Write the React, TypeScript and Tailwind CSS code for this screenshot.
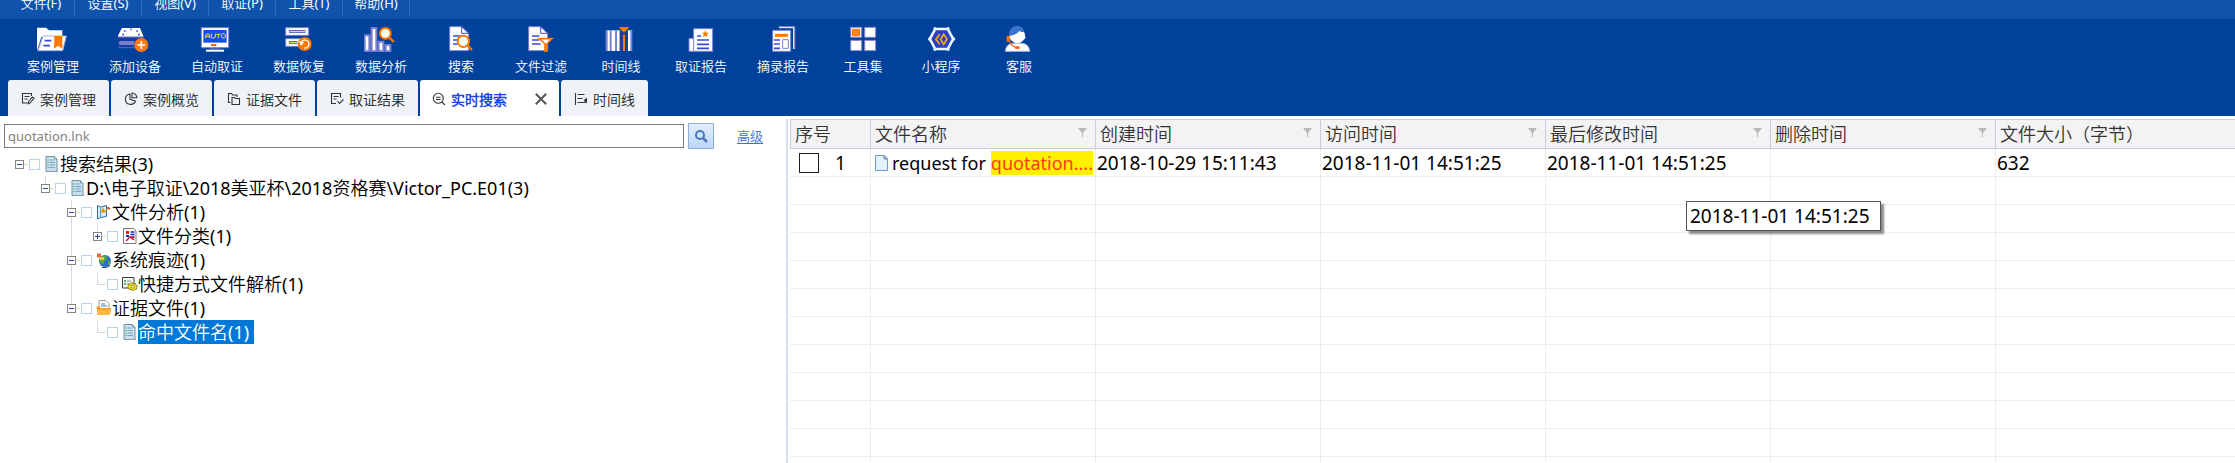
import React from "react";
import type { ReactNode } from "react";

const menus = ["文件(F)", "设置(S)", "视图(V)", "取证(P)", "工具(T)", "帮助(H)"];

function ToolIcon({ x, children }: { x: number; children: ReactNode }) {
  return (
    <svg width="34" height="26" viewBox={`${x} 78 102 78`} aria-hidden="true" className="block">
      {children}
    </svg>
  );
}

const lilac = "#7c80d0";
const navy = "#3a4ccf";
const orange = "#ff7800";

const tools: { label: string; icon: ReactNode }[] = [
  {
    label: "案例管理",
    icon: (
      <ToolIcon x={108}>
        <path d="M111 83h27l9 8h40v20H124l-13 42z" fill="#fff" />
        <path d="M129 108h70l-11 44h-74z" fill="#fff" stroke="#a9aee0" strokeWidth="3" />
        <path d="M134 122h20M130 137h20" stroke={navy} strokeWidth="5" />
        <path d="M163 108h24v38l-13-9-12 9z" fill={orange} />
      </ToolIcon>
    ),
  },
  {
    label: "添加设备",
    icon: (
      <ToolIcon x={354}>
        <path d="M366 84h54l11 26h-79z" fill="#fff" />
        <path d="M352 112h78v31h-78z" fill="#1b3c9c" stroke="#5a64c0" strokeWidth="3" />
        <path d="M362 129h36" stroke="#7480cc" strokeWidth="12" strokeLinecap="round" />
        <path d="M372 93h5M409 93h5M367 104h5M414 104h5M391 88h4" stroke={navy} strokeWidth="5" />
        <circle cx="424" cy="135" r="21" fill={orange} />
        <path d="M424 123v24M412 135h24" stroke="#fff" strokeWidth="5" />
      </ToolIcon>
    ),
  },
  {
    label: "自动取证",
    icon: (
      <ToolIcon x={600}>
        <path d="M604 83h82v60h-82z" fill="#fff" stroke={lilac} strokeWidth="3" />
        <path d="M610 90h70v38h-70z" fill="#1450e6" />
        <path
          d="M617 115v-9l3-4h6l3 4v9M617 109h12M634 101v10l3 3h6l3-3v-10M649 103h13M655 103v12M665 104l3-3h5l3 3v7l-3 3h-5l-3-3z"
          fill="none"
          stroke="#f4ea2a"
          strokeWidth="3"
        />
        <path d="M633 135h16" stroke="#ff6000" strokeWidth="6" />
        <path d="M618 152h54" stroke="#fff" strokeWidth="6" />
        <path d="M630 147h30" stroke={lilac} strokeWidth="3" />
      </ToolIcon>
    ),
  },
  {
    label: "数据恢复",
    icon: (
      <ToolIcon x={846}>
        <path d="M857 83h69v23h-69zM857 116h69v23h-69z" fill="#fff" stroke={lilac} strokeWidth="3" />
        <path d="M867 94h49M867 127h25" stroke="#303cae" strokeWidth="8" />
        <path d="M868 94h47M868 127h23" stroke="#e8e83c" strokeWidth="4" />
        <circle cx="914" cy="132" r="21" fill={orange} />
        <path d="M903 130a12 12 0 1 1 10 14" fill="none" stroke="#fff" strokeWidth="4" />
        <path d="M896 124l16 2-8 11z" fill="#fff" />
      </ToolIcon>
    ),
  },
  {
    label: "数据分析",
    icon: (
      <ToolIcon x={1092}>
        <path
          d="M1094 106h14v48h-14zM1115 84h14v70h-14zM1136 125h14v29h-14zM1157 135h14v19h-14z"
          fill="#fff"
          stroke={lilac}
          strokeWidth="6"
        />
        <circle cx="1156" cy="100" r="16" fill="#fff" stroke={orange} strokeWidth="6" />
        <path d="M1167 112l15 14" stroke={orange} strokeWidth="7" />
      </ToolIcon>
    ),
  },
  {
    label: "搜索",
    icon: (
      <ToolIcon x={132}>
        <path d="M149 80h37l20 20v52h-57z" fill="#fff" stroke={lilac} strokeWidth="3" />
        <path d="M185 80v20h21z" fill="#fff" stroke={navy} strokeWidth="3" />
        <path d="M159 108h24M159 120h14M159 132h14" stroke={navy} strokeWidth="5" />
        <circle cx="190" cy="124" r="17" fill="#fff" stroke={orange} strokeWidth="6" />
        <path d="M203 137l13 13" stroke={orange} strokeWidth="7" />
      </ToolIcon>
    ),
  },
  {
    label: "文件过滤",
    icon: (
      <ToolIcon x={372}>
        <path d="M386 80h37l20 20v52h-57z" fill="#fff" stroke={lilac} strokeWidth="3" />
        <path d="M422 80v20h21z" fill="#fff" stroke={navy} strokeWidth="3" />
        <path d="M396 108h22M396 120h22M396 132h26" stroke={navy} strokeWidth="5" />
        <path d="M418 116h38l-16 16v22h-5v-22z" fill="#fff" stroke={orange} strokeWidth="5" />
      </ToolIcon>
    ),
  },
  {
    label: "时间线",
    icon: (
      <ToolIcon x={612}>
        <path d="M618 91h78v62h-78z" fill="#fff" />
        <path d="M620 91v62M632 91v62M648 91v62M661 91v62M694 91v62" stroke={lilac} strokeWidth="6" />
        <path d="M660 91h24v62h-24z" fill="#1b3c9c" />
        <path d="M672 104v49" stroke={orange} strokeWidth="6" />
        <path d="M656 81h32l-16 17z" fill={orange} />
      </ToolIcon>
    ),
  },
  {
    label: "取证报告",
    icon: (
      <ToolIcon x={852}>
        <path d="M867 115h18v39h-18z" fill="#fff" stroke={lilac} strokeWidth="3" />
        <path d="M881 86h57v68h-57z" fill="#fff" stroke={lilac} strokeWidth="3" />
        <path d="M891 108h12M891 120h36M891 133h36M891 145h36" stroke={navy} strokeWidth="5" />
        <path d="M916 91l3 7h7l-5 5 2 8-7-4-7 4 2-8-5-5h7z" fill={orange} />
      </ToolIcon>
    ),
  },
  {
    label: "摘录报告",
    icon: (
      <ToolIcon x={1098}>
        <path d="M1137 81h46v66" fill="none" stroke={lilac} strokeWidth="6" />
        <path d="M1137 83h44v64" fill="none" stroke="#fff" strokeWidth="3" />
        <path d="M1118 91h54v63h-54z" fill="#fff" stroke={lilac} strokeWidth="3" />
        <path d="M1125 106h39" stroke={orange} strokeWidth="9" />
        <path d="M1122 120h18M1122 132h18M1122 145h18" stroke={navy} strokeWidth="5" />
        <path d="M1148 119h17v26h-17z" fill="#fff" stroke={lilac} strokeWidth="3" />
      </ToolIcon>
    ),
  },
  {
    label: "工具集",
    icon: (
      <ToolIcon x={138}>
        <path
          d="M152 82h33v30h-33zM194 82h33v30h-33zM152 121h33v31h-33zM194 121h33v31h-33z"
          fill="#fff"
          stroke={lilac}
          strokeWidth="3"
        />
        <path d="M157 88h22v19h-22z" fill="#ff8c00" stroke="#ff6a00" strokeWidth="3" />
      </ToolIcon>
    ),
  },
  {
    label: "小程序",
    icon: (
      <ToolIcon x={372}>
        <path d="M405 86h39l17 31-17 31h-39l-17-31z" fill="#dff2ff" stroke="#f2fbff" strokeWidth="5" strokeLinejoin="round" />
        <path d="M408 91h33l14 26-14 26h-33l-14-26z" fill="#2c3fc4" />
        <g fill="#dff2ff">
          <circle cx="405" cy="86" r="5" />
          <circle cx="444" cy="86" r="5" />
          <circle cx="461" cy="117" r="5" />
          <circle cx="444" cy="148" r="5" />
          <circle cx="405" cy="148" r="5" />
          <circle cx="389" cy="117" r="5" />
        </g>
        <path d="M419 103l-11 15 11 15M431 103l-9 15 9 15 10-15z" fill="none" stroke="#f5a81c" strokeWidth="5" />
      </ToolIcon>
    ),
  },
  {
    label: "客服",
    icon: (
      <ToolIcon x={606}>
        <path d="M616 154c1-14 10-23 22-24h28c14 1 22 10 23 24z" fill="#fff" stroke="#a9aee0" strokeWidth="3" />
        <circle cx="652" cy="107" r="23" fill="#fff" />
        <path d="M672 102l5 11-6 6z" fill="#fff" />
        <path d="M628 108c-3-18 8-30 23-30 12 0 20 7 23 18-8 1-13-1-16-4-5 10-17 13-30 16z" fill="#3a74cc" />
        <path d="M620 108h10v17h-10z" fill={orange} />
        <path d="M629 122c2 10 8 17 18 20" fill="none" stroke="#ff6000" strokeWidth="4" />
        <ellipse cx="652" cy="143" rx="8" ry="4" fill="#ff6000" />
      </ToolIcon>
    ),
  },
];

/* Outline icons drawn on a 14 x 14 grid */
function TabIcon({ children }: { children: ReactNode }) {
  return (
    <svg width="14" height="14" viewBox="0 0 14 14" fill="none" stroke="#333" strokeWidth="1.1" aria-hidden="true" className="block shrink-0">
      {children}
    </svg>
  );
}

const tabs: { label: string; active?: boolean; icon: ReactNode }[] = [
  {
    label: "案例管理",
    icon: (
      <TabIcon>
        <path d="M10.5 4V1.5H1.5V11H6M3.5 4.5h5M3.5 7h3M7.5 9.5L11.5 5l1.5 1.3L9 11l-2 .6z" />
      </TabIcon>
    ),
  },
  {
    label: "案例概览",
    icon: (
      <TabIcon>
        <path d="M6 2A5.2 5.2 0 1 0 11.5 9L6 7.3zM8 1v4.8h4.8A4.8 4.8 0 0 0 8 1z" />
      </TabIcon>
    ),
  },
  {
    label: "证据文件",
    icon: (
      <TabIcon>
        <path d="M3.5 10.5h-2v-9h3l1 1.5H10v2M5 12.5V5.5h2.5l1 1h4v6z" />
      </TabIcon>
    ),
  },
  {
    label: "取证结果",
    icon: (
      <TabIcon>
        <path d="M10.5 5.5v-4h-9v10H6M3.5 4.5h5M3.5 7h3M7.5 9l2 2.5 4-4" />
      </TabIcon>
    ),
  },
  {
    label: "实时搜索",
    active: true,
    icon: (
      <TabIcon>
        <circle cx="6.3" cy="6.3" r="5" />
        <path d="M10 10l3 3M4 5.3h4.6M4 7.5h4.6" />
      </TabIcon>
    ),
  },
  {
    label: "时间线",
    icon: (
      <TabIcon>
        <path d="M1.5 1v12M3.5 2.5h7M3.5 6.5h5M3.5 10.5h8" />
        <path d="M13 5.5v6L9.5 8.5z" fill="#333" stroke="none" />
      </TabIcon>
    ),
  },
];

function NotesIcon() {
  return (
    <svg width="16" height="16" viewBox="0 0 16 16" aria-hidden="true" className="block shrink-0">
      <path d="M2 .5h8.5L13 3v12.5H2z" fill="#c7e0ea" stroke="#6f93a8" />
      <path d="M10.5.5V3H13" fill="#eef7fb" stroke="#6f93a8" />
      <path d="M3.5 4h1M3.5 6.5h1M3.5 9h1M3.5 11.5h1" stroke="#3f9a63" />
      <path d="M5.5 4h4M5.5 6.5h5.500M5.500 9h5.500M5.500 11.500h5.500" stroke="#7fa3c4" />
      <path d="M13.500 14v2H4" fill="none" stroke="#a9a9a9" />
    </svg>
  );
}

function AnalysisIcon() {
  return (
    <svg width="16" height="16" viewBox="0 0 16 16" aria-hidden="true" className="block shrink-0">
      <path d="M1.500 1.500l3 1.500 6-1.500v11l-6 1-3 1.500z" fill="#d7ecfa" stroke="#2b6ca3" />
      <path d="M4.500 3v11" stroke="#5b9bc8" />
      <path d="M4 7l2 1 1-3 1 3 5-4" fill="none" stroke="#d09a18" strokeWidth="1.500" />
      <path d="M11.500 3l2.500 2" stroke="#c0321e" strokeWidth="1.500" />
    </svg>
  );
}

function CategoryIcon() {
  return (
    <svg width="16" height="16" viewBox="0 0 16 16" aria-hidden="true" className="block shrink-0">
      <path d="M1.500.5h10L14 3v12.500H1.500z" fill="#fff" stroke="#777" />
      <path d="M4 3h3v3H4z" fill="#d8202c" />
      <path d="M8.500 4h4M8.500 6.500h4M8.500 9h4" stroke="#1524c8" strokeWidth="1.500" />
      <path d="M4 8h3" stroke="#1524c8" strokeWidth="2" />
      <path d="M4 13l4-4 4 3M11 8v4" fill="none" stroke="#d8202c" strokeWidth="1.500" />
    </svg>
  );
}

function GlobeIcon() {
  return (
    <svg width="16" height="16" viewBox="0 0 16 16" aria-hidden="true" className="block shrink-0">
      <circle cx="9" cy="9" r="6" fill="#2c6fc9" />
      <path d="M7 4c3-1 5 1 4 3s-3 1-3 4-3 1-4-1 0-5 3-6z" fill="#57a83c" />
      <path d="M12 9l2.500-1-1 4-2 1z" fill="#57a83c" />
      <path d="M6 15.300c3 .8 6 0 8-2" fill="none" stroke="#123c77" />
      <path d="M1 1.500h4v4H1z" fill="#e5683c" />
      <path d="M4 5h4v3H4z" fill="#f3c23b" />
    </svg>
  );
}

function ShortcutIcon() {
  return (
    <svg width="16" height="16" viewBox="0 0 16 16" aria-hidden="true" className="block shrink-0">
      <path d="M.5 1.500h11.500v10.500H.5z" fill="#f4f6f4" stroke="#3c3c3c" />
      <path d="M2 5h2M2 8h2" stroke="#1fa33a" strokeWidth="1.500" />
      <path d="M5 5h4M5 8h2" stroke="#888" />
      <path
        d="M10 6.500l1.500 1.300 2-.5.3 1.700 1.700 1-1 1.500.3 1.700-2 .3-1.500 1.200-1.700-1-2 .2-.6-1.600-1.500-1 .9-1.500-.2-1.700 2-.2z"
        fill="#f2e01c"
        stroke="#6d6400"
        strokeWidth=".7"
      />
      <circle cx="10.700" cy="10.700" r="1.500" fill="#fff" stroke="#6d6400" strokeWidth=".7" />
    </svg>
  );
}

function FolderIcon() {
  return (
    <svg width="16" height="16" viewBox="0 0 16 16" aria-hidden="true" className="block shrink-0">
      <path d="M3 .5h7l3 3V9H3z" fill="#fff" stroke="#9a9a9a" />
      <path d="M5 4h4M5 6h6" stroke="#3d78b8" />
      <path d="M.5 6.500h3l1 1.500h10.500l-1 7H1.500z" fill="#f39a1e" />
      <path d="M1.200 9.500h13.500l-1 5.500H1.500z" fill="#ffb743" />
    </svg>
  );
}

type Line = "none" | "on";
const tree: {
  label: string;
  expander?: "+" | "-";
  above: Line;
  below: Line;
  indent: Line[];
  icon: ReactNode;
  selected?: boolean;
}[] = [
  { label: "搜索结果(3)", expander: "-", above: "none", below: "none", indent: [], icon: <NotesIcon /> },
  {
    label: "D:\\电子取证\\2018美亚杯\\2018资格赛\\Victor_PC.E01(3)",
    expander: "-",
    above: "on",
    below: "none",
    indent: ["none"],
    icon: <NotesIcon />,
  },
  { label: "文件分析(1)", expander: "-", above: "on", below: "on", indent: ["none", "none"], icon: <AnalysisIcon /> },
  { label: "文件分类(1)", expander: "+", above: "on", below: "none", indent: ["none", "none", "on"], icon: <CategoryIcon /> },
  { label: "系统痕迹(1)", expander: "-", above: "on", below: "on", indent: ["none", "none"], icon: <GlobeIcon /> },
  { label: "快捷方式文件解析(1)", above: "on", below: "none", indent: ["none", "none", "on"], icon: <ShortcutIcon /> },
  { label: "证据文件(1)", expander: "-", above: "on", below: "none", indent: ["none", "none"], icon: <FolderIcon /> },
  {
    label: "命中文件名(1)",
    above: "on",
    below: "none",
    indent: ["none", "none", "none"],
    icon: <NotesIcon />,
    selected: true,
  },
];

const headers = [
  { label: "序号", filter: false },
  { label: "文件名称", filter: true },
  { label: "创建时间", filter: true },
  { label: "访问时间", filter: true },
  { label: "最后修改时间", filter: true },
  { label: "删除时间", filter: true },
  { label: "文件大小（字节）", filter: false },
];

const blankRows = Array.from({ length: 12 }, (_, i) => i);
const cell = "h-7 border-b border-r border-[#ededed] p-0";

export default function App() {
  return (
    <div className="flex h-screen flex-col overflow-hidden bg-white font-['Noto_Sans','Noto_Sans_CJK_SC_DemiLight','Noto_Sans_CJK_SC_Light','Noto_Sans_CJK_SC',sans-serif] text-black">
      <header className="shrink-0 bg-[#00419c] text-white">
        <nav className="flex h-[19px] items-end overflow-hidden bg-[#1053ad] pl-2">
          {menus.map((m) => (
            <button
              key={m}
              type="button"
              className="mb-[3px] flex h-[26px] w-[67px] shrink-0 items-center justify-center border-r border-[#2f6cbd] text-[13px] leading-none"
            >
              {m}
            </button>
          ))}
        </nav>
        <div className="flex pl-3 pt-[7px]">
          {tools.map((t) => (
            <button key={t.label} type="button" className="flex min-w-[78px] shrink-0 flex-col items-center px-[15px]">
              {t.icon}
              <span className="mt-1 whitespace-nowrap text-[13px] leading-5">{t.label}</span>
            </button>
          ))}
        </div>
        <div className="mt-1 flex gap-0.5 pl-2">
          {tabs.map((t) => (
            <div
              key={t.label}
              className={
                t.active
                  ? "flex h-9 shrink-0 items-center rounded-t-[3px] bg-white px-3 pt-0.5 text-[14px] font-bold text-[#1a46f0]"
                  : "flex h-9 shrink-0 items-center rounded-t-[3px] bg-[#eff3f8] px-[13px] pt-0.5 text-[14px] text-[#222]"
              }
            >
              <button type="button" className="flex items-center gap-[5px] whitespace-nowrap">
                {t.icon}
                {t.label}
              </button>
              {t.active && (
                <button type="button" aria-label="关闭" className="ml-7">
                  <svg width="12" height="12" viewBox="0 0 12 12" className="block">
                    <path d="M.8.8l10.400 10.400M11.200.8L.8 11.200" stroke="#555" strokeWidth="2" />
                  </svg>
                </button>
              )}
            </div>
          ))}
        </div>
      </header>

      <main className="flex min-h-0 flex-1">
        <section className="w-[786px] shrink-0 pt-[7px]">
          <form className="flex items-center pl-1" onSubmit={(e) => e.preventDefault()}>
            <input
              type="text"
              aria-label="关键词"
              defaultValue="quotation.lnk"
              className="h-6 w-[680px] border border-[#7a7a7a] bg-white pl-[3px] text-[13px] text-[#838383] outline-none"
            />
            <button
              type="submit"
              aria-label="查找"
              className="ml-1 flex h-[26px] w-[26px] items-center justify-center border border-[#8fadd6] bg-linear-to-b from-[#e3eefd] to-[#bcd7fa]"
            >
              <svg width="14" height="14" viewBox="0 0 14 14" fill="none" stroke="#4a78b5">
                <circle cx="6" cy="6" r="4" strokeWidth="2" />
                <path d="M9 9l4 4" strokeWidth="2.500" />
              </svg>
            </button>
            <a href="#advanced" className="ml-[23px] text-[13px] leading-5 text-[#3b6fd8] underline underline-offset-2">
              高级
            </a>
          </form>
          <ul className="mt-[3px] pl-[15px]">
            {tree.map((n) => (
              <li key={n.label} className="flex h-6 items-center">
                {n.indent.map((l, i) => (
                  <span key={i} className="flex h-6 w-[26px] shrink-0">
                    {l === "on" && i === n.indent.length - 1 && <span className="ml-1 w-px bg-[#d9d9d9]" />}
                  </span>
                ))}
                <span className="flex h-6 w-[9px] shrink-0 flex-col items-center">
                  <span className={n.above === "on" ? "w-px flex-1 bg-[#d9d9d9]" : "flex-1"} />
                  {n.expander ? (
                    <button
                      type="button"
                      aria-label={n.expander === "+" ? "展开" : "折叠"}
                      className="flex h-[9px] w-[9px] shrink-0 items-center justify-center border border-[#848484] bg-white"
                    >
                      <svg width="5" height="5" viewBox="0 0 5 5" className="block" stroke="#2a4a8c">
                        <path d={n.expander === "+" ? "M0 2.500h5M2.500 0v5" : "M0 2.500h5"} />
                      </svg>
                    </button>
                  ) : (
                    <span className="ml-1 h-px w-[5px] shrink-0 bg-[#d9d9d9]" />
                  )}
                  <span className={n.below === "on" ? "w-px flex-1 bg-[#d9d9d9]" : "flex-1"} />
                </span>
                <span className="mr-px h-px w-1 shrink-0 bg-[#d9d9d9]" />
                <label className="flex items-center whitespace-nowrap">
                  <input type="checkbox" className="mr-1 h-[11px] w-[11px] shrink-0 appearance-none border border-[#b9d0fb] bg-white" />
                  {n.icon}
                  <span
                    className={
                      n.selected
                        ? "h-6 bg-[#0078d7] pr-[5px] text-[18px] leading-6 text-white"
                        : "h-6 text-[18px] leading-6"
                    }
                  >
                    {n.label}
                  </span>
                </label>
              </li>
            ))}
          </ul>
        </section>

        <section className="relative mt-[3px] min-w-0 flex-1 overflow-hidden border-l-2 border-[#d5e1f2] pl-0.5">
          <table className="w-full table-fixed border-separate border-spacing-0">
            <colgroup>
              <col className="w-[81px]" />
              <col className="w-[225px]" />
              <col className="w-[225px]" />
              <col className="w-[225px]" />
              <col className="w-[225px]" />
              <col className="w-[225px]" />
              <col />
            </colgroup>
            <thead>
              <tr>
                {headers.map((h) => (
                  <th
                    key={h.label}
                    className="h-[30px] border-y border-r border-[#cdc9df] bg-[#f3f3f3] p-0 text-left font-normal first:border-l last:border-r-0"
                  >
                    <span className="flex items-center justify-between whitespace-nowrap pl-1 pr-2 text-[18px] leading-6 text-[#333]">
                      {h.label}
                      {h.filter && (
                        <svg width="9" height="9" viewBox="0 0 9 9" className="mb-1 block" aria-hidden="true">
                          <path d="M0 0h9L5 5v4H4V5z" fill="#b9b9b9" />
                        </svg>
                      )}
                    </span>
                  </th>
                ))}
              </tr>
            </thead>
            <tbody className="text-[19px] leading-6">
              <tr>
                <td className={cell}>
                  <label className="flex items-center pl-[9px]">
                    <input type="checkbox" className="mr-4 h-5 w-5 appearance-none border border-[#222] bg-white" />1
                  </label>
                </td>
                <td className={cell}>
                  <span className="flex items-center whitespace-nowrap pl-1 pr-0.5">
                    <svg width="14" height="16" viewBox="0 0 14 16" className="mr-[3px] block shrink-0" aria-hidden="true">
                      <path d="M.5.5h8.500L12.500 4v11.500H.5z" fill="#e4f0fc" stroke="#6a9cd0" />
                      <path d="M9 .5V4h3.500z" fill="#9dc0e4" stroke="#6a8fb8" />
                    </svg>
                    <span className="whitespace-pre text-[18px]">request for </span>
                    <mark className="ml-auto bg-[#ffef00] text-[18px] text-[#ff3b1f]">quotation....</mark>
                  </span>
                </td>
                <td className={cell}>
                  <span className="pl-px">2018-10-29 15:11:43</span>
                </td>
                <td className={cell}>
                  <span className="pl-px">2018-11-01 14:51:25</span>
                </td>
                <td className={cell}>
                  <span className="pl-px">2018-11-01 14:51:25</span>
                </td>
                <td className={cell} />
                <td className="h-7 border-b border-[#ededed] p-0">
                  <span className="pl-px">632</span>
                </td>
              </tr>
              {blankRows.map((r) => (
                <tr key={r}>
                  {headers.map((h) => (
                    <td key={h.label} className="h-7 border-b border-r border-[#ededed] p-0 last:border-r-0" />
                  ))}
                </tr>
              ))}
            </tbody>
          </table>
          <div
            role="tooltip"
            className="absolute left-[898px] top-[82px] border border-[#555] bg-white pl-[3px] pr-[10px] text-[19px] leading-7 shadow-[3px_3px_2px_#8a8a8a]"
          >
            2018-11-01 14:51:25
          </div>
        </section>
      </main>
    </div>
  );
}
